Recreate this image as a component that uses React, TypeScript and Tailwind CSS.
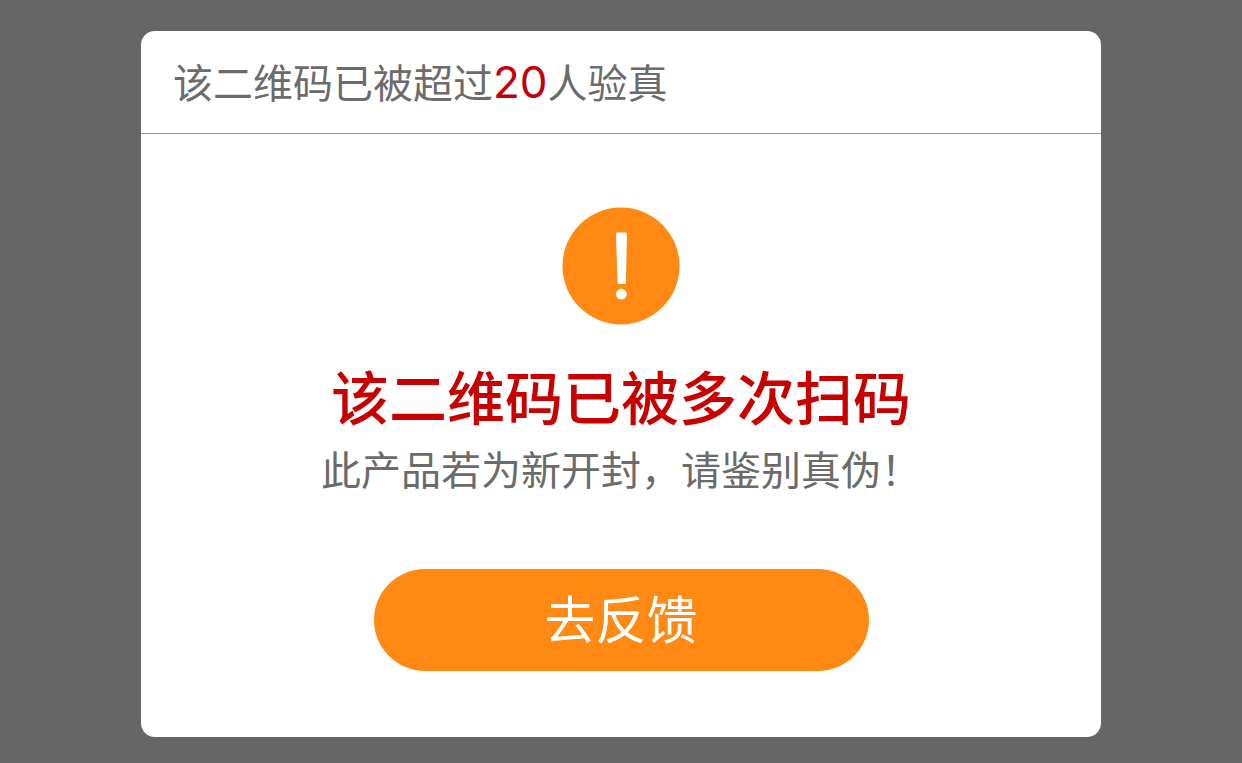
export default function App() {
  return (
    <div className="flex min-h-screen items-start justify-center bg-[#666666] px-[141px] pt-[31px] pb-[26px] font-['Inter','Noto_Sans_CJK_SC',sans-serif]">
      <section role="dialog" aria-labelledby="dialog-title" className="w-full overflow-hidden rounded-[14px] bg-white text-[#6b6b6b]">
        <header className="border-b border-[#999999] px-8 pt-[21px] pb-[19px]">
          <p className="text-[40px] leading-[60px]">
            该二维码已被超过<span className="text-[44px] text-[#c20008]">20</span>人验真
          </p>
        </header>
        <div className="flex flex-col items-center px-8 pt-[73px] pb-[66px]">
          <svg viewBox="0 0 118 118" className="size-[118px]" aria-hidden="true">
            <circle cx="59" cy="59" r="58.5" fill="#ff8912" />
            <path d="M55.300 25.500h8.400a1.300 1.300 0 0 1 1.300 1.300l-1.100 48.700a1.500 1.500 0 0 1-1.500 1.500h-5.400a1.500 1.500 0 0 1-1.500-1.500L54 26.800a1.300 1.300 0 0 1 1.300-1.300Z" fill="#fff" />
            <circle cx="59.4" cy="87.2" r="5.4" fill="#fff" />
          </svg>
          <h1 id="dialog-title" className="mt-8 text-center text-[58px] leading-[84px] font-medium text-[#c80000]">
            该二维码已被多次扫码
          </h1>
          <p className="text-center text-[40px] leading-[60px]">此产品若为新开封，请鉴别真伪！</p>
          <button
            type="button"
            className="mt-[68px] w-full max-w-[495px] cursor-pointer rounded-full bg-[#ff8912] pt-[14px] pb-3 text-[51px] leading-[76px] text-white"
          >
            去反馈
          </button>
        </div>
      </section>
    </div>
  );
}
